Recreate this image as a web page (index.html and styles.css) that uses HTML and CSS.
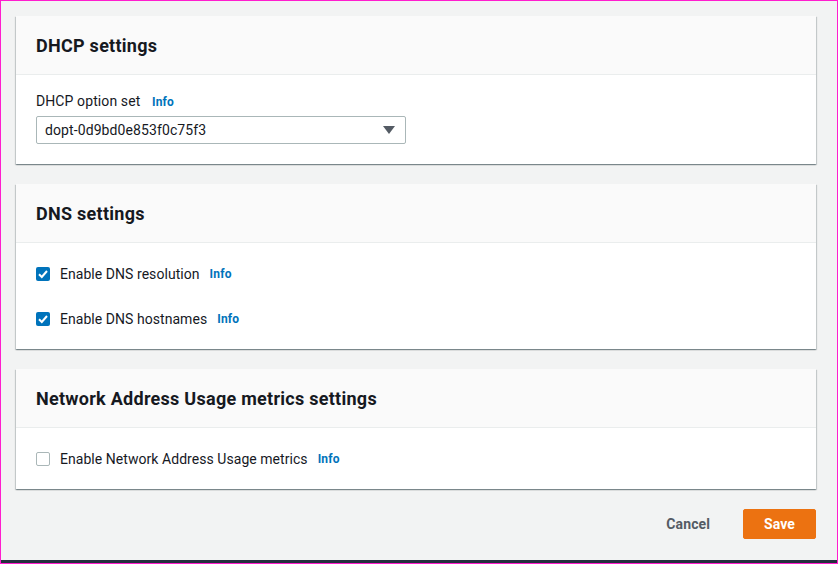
FILE: index.html
```html
<!DOCTYPE html>
<html lang="en">
<head>
<meta charset="utf-8">
<title>Edit VPC settings</title>
<link rel="stylesheet" href="styles.css">
</head>
<body>
<div class="frame">
  <main class="page">
    <section class="card">
      <header class="card-header"><h2>DHCP settings</h2></header>
      <div class="card-body">
        <div class="field-label">DHCP option set <a class="info" href="#">Info</a></div>
        <div class="select">
          <span>dopt-0d9bd0e853f0c75f3</span>
          <svg class="caret" width="12" height="8" viewBox="0 0 12 8"><path d="M0 0H12L6 8Z" fill="#545b64"/></svg>
        </div>
      </div>
    </section>

    <section class="card">
      <header class="card-header"><h2>DNS settings</h2></header>
      <div class="card-body rows">
        <label class="check-row">
          <span class="checkbox checked"><svg width="14" height="14" viewBox="0 0 14 14"><path d="M3 7.2L5.8 10L11 4" fill="none" stroke="#fff" stroke-width="2"/></svg></span>
          <span class="check-text">Enable DNS resolution</span>
          <a class="info" href="#">Info</a>
        </label>
        <label class="check-row">
          <span class="checkbox checked"><svg width="14" height="14" viewBox="0 0 14 14"><path d="M3 7.2L5.8 10L11 4" fill="none" stroke="#fff" stroke-width="2"/></svg></span>
          <span class="check-text">Enable DNS hostnames</span>
          <a class="info" href="#">Info</a>
        </label>
      </div>
    </section>

    <section class="card">
      <header class="card-header"><h2>Network Address Usage metrics settings</h2></header>
      <div class="card-body rows">
        <label class="check-row">
          <span class="checkbox"></span>
          <span class="check-text">Enable Network Address Usage metrics</span>
          <a class="info" href="#">Info</a>
        </label>
      </div>
    </section>

    <div class="actions">
      <button class="btn btn-link" type="button">Cancel</button>
      <button class="btn btn-primary" type="button">Save</button>
    </div>
  </main>
  <div class="footer-bar"></div>
</div>
</body>
</html>
```

FILE: styles.css
```css
* { box-sizing: border-box; }

html, body {
  margin: 0;
  padding: 0;
}

body {
  font-family: Roboto, "Liberation Sans", Arial, sans-serif;
  color: #16191f;
  background: #f2f3f3;
}

.frame {
  height: 564px;
  border: 1px solid #ff1dce;
  display: flex;
  flex-direction: column;
  background: #f2f3f3;
}

.page {
  flex: 1;
  padding: 15px 21px 0 15px;
  display: flex;
  flex-direction: column;
  gap: 20px;
}

.footer-bar {
  height: 3px;
  background: #232f3e;
}

.card {
  background: #fff;
  box-shadow: 0 1px 1px 0 rgba(0, 28, 36, 0.3), 1px 1px 1px 0 rgba(0, 28, 36, 0.15), -1px 1px 1px 0 rgba(0, 28, 36, 0.15);
}

.card-header {
  height: 59px;
  background: #fafafa;
  border-bottom: 1px solid #eaeded;
  padding: 0 20px;
  display: flex;
  align-items: center;
}

.card-header h2 {
  margin: 0;
  font-size: 18px;
  font-weight: 700;
  line-height: 22px;
  letter-spacing: 0.27px;
  padding-top: 1px;
}

.card-body {
  padding: 16px 20px 20px;
}

.field-label {
  font-size: 14px;
  line-height: 20px;
  margin-bottom: 4px;
  letter-spacing: 0.1px;
}

.info {
  color: #0073bb;
  font-weight: 700;
  font-size: 12px;
  text-decoration: none;
  margin-left: 8px;
  letter-spacing: 0.2px;
}

.select {
  width: 370px;
  height: 28px;
  border: 1px solid #aab7b8;
  border-radius: 2px;
  display: flex;
  align-items: center;
  justify-content: space-between;
  padding: 0 10px 0 8px;
  font-size: 14px;
  letter-spacing: 0.1px;
}

.caret { display: block; }

.rows {
  padding-top: 20px;
  display: flex;
  flex-direction: column;
  gap: 24px;
}

.check-row {
  display: flex;
  align-items: center;
  height: 21px;
  font-size: 14px;
  letter-spacing: 0.05px;
}

.checkbox {
  width: 14px;
  height: 14px;
  border: 1px solid #aab7b8;
  border-radius: 2px;
  background: #fff;
  margin-right: 10px;
  display: flex;
}

.checkbox.checked {
  background: #0073bb;
  border: none;
}

.check-text { margin-right: 2px; }

.actions {
  display: flex;
  justify-content: flex-end;
  gap: 12px;
}

.btn {
  font-family: inherit;
  font-size: 14px;
  font-weight: 700;
  height: 30px;
  padding: 0 20px;
  border-radius: 2px;
  border: 1px solid transparent;
  cursor: pointer;
  letter-spacing: 0.1px;
}

.btn-link {
  background: transparent;
  color: #545b64;
}

.btn-primary {
  background: #ec7211;
  border-color: #ec7211;
  color: #fff;
}
```
